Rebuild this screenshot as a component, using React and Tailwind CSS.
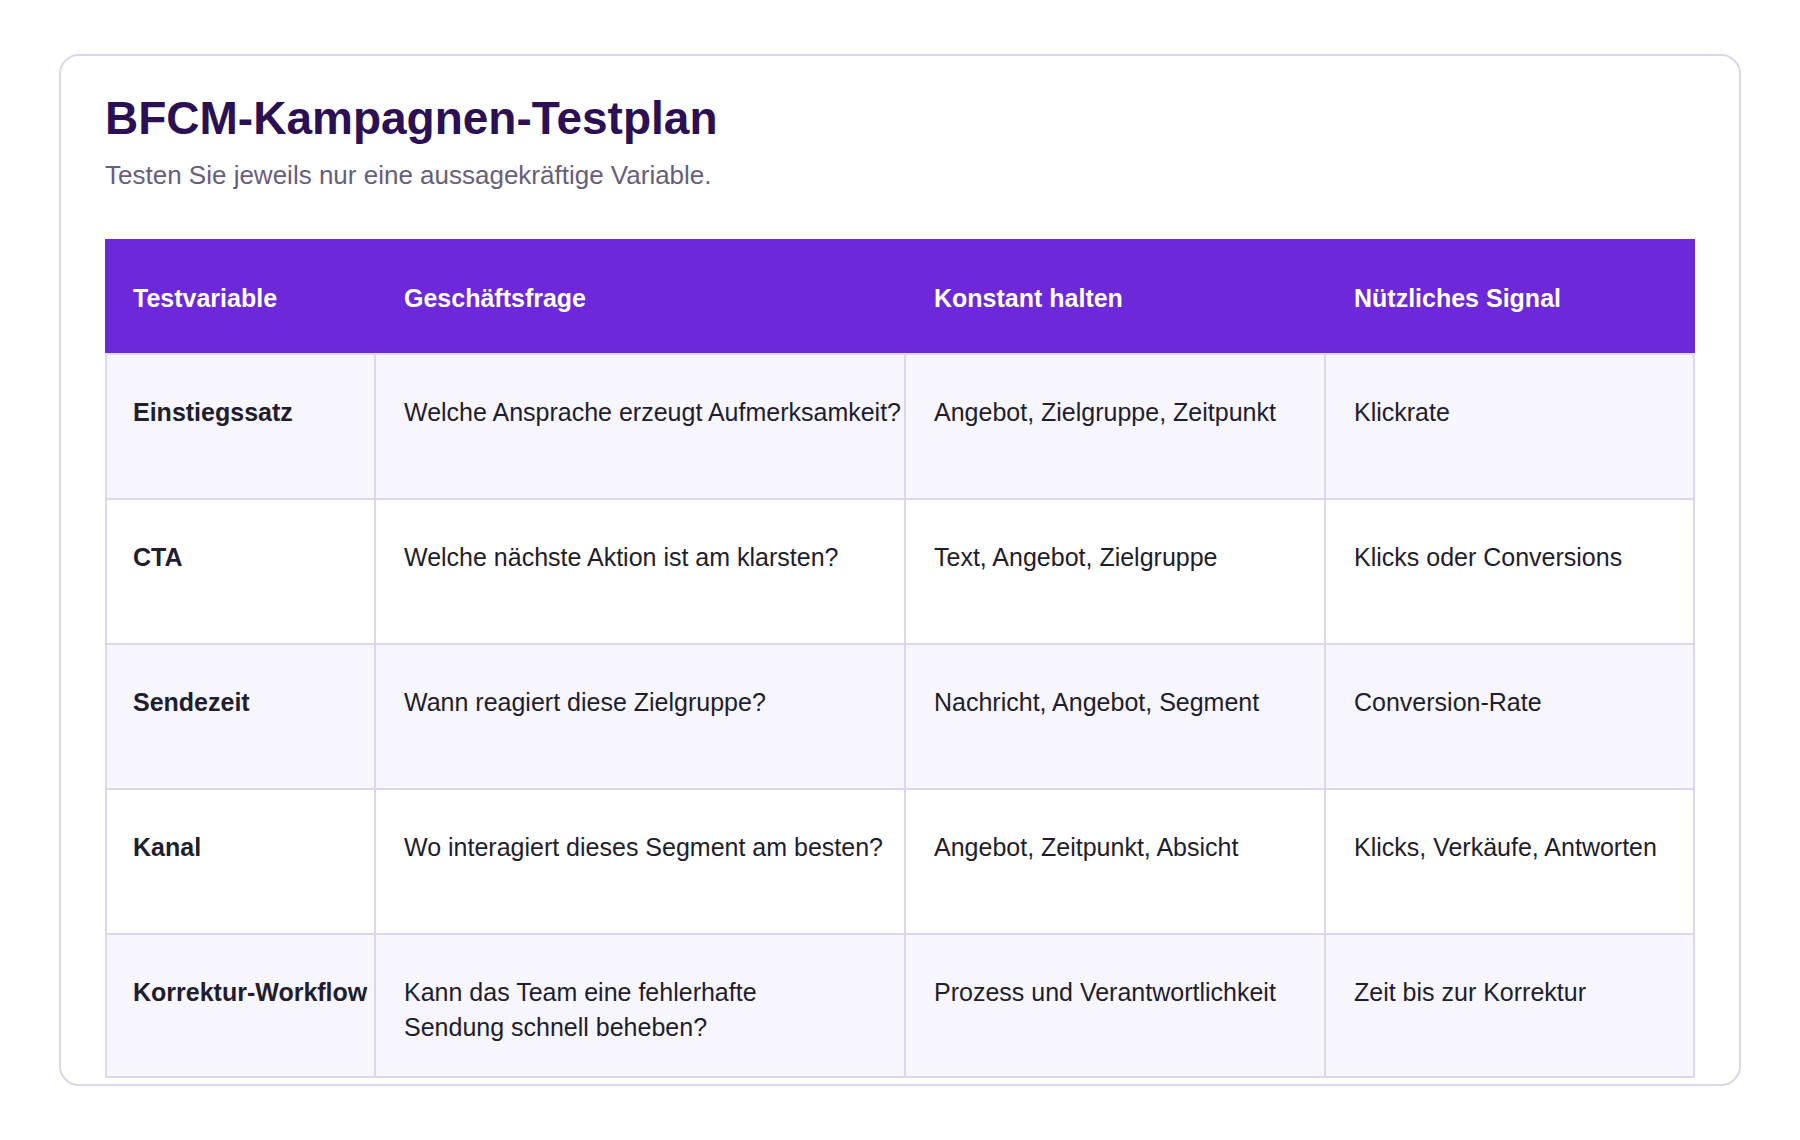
// App.jsx
const rows = [
  {
    variable: "Einstiegssatz",
    question: ["Welche Ansprache erzeugt Aufmerksamkeit?"],
    keep: "Angebot, Zielgruppe, Zeitpunkt",
    signal: "Klickrate",
  },
  {
    variable: "CTA",
    question: ["Welche nächste Aktion ist am klarsten?"],
    keep: "Text, Angebot, Zielgruppe",
    signal: "Klicks oder Conversions",
  },
  {
    variable: "Sendezeit",
    question: ["Wann reagiert diese Zielgruppe?"],
    keep: "Nachricht, Angebot, Segment",
    signal: "Conversion-Rate",
  },
  {
    variable: "Kanal",
    question: ["Wo interagiert dieses Segment am besten?"],
    keep: "Angebot, Zeitpunkt, Absicht",
    signal: "Klicks, Verkäufe, Antworten",
  },
  {
    variable: "Korrektur-Workflow",
    question: ["Kann das Team eine fehlerhafte", "Sendung schnell beheben?"],
    keep: "Prozess und Verantwortlichkeit",
    signal: "Zeit bis zur Korrektur",
  },
];

export default function App() {
  return (
    <div className="min-h-[1140px] bg-white px-[59px] pt-[54px] font-['Liberation_Sans',Arial,sans-serif]">
      {/* card */}
      <div className="h-[1032px] overflow-hidden rounded-[20px] border-2 border-[#dcd6ec] bg-white px-[44px] pt-[35px]">
        <h1 className="text-[46px] font-bold leading-[1.2] text-[#2b1153]">
          BFCM-Kampagnen-Testplan
        </h1>
        <p className="mt-[10px] text-[26px] leading-[1.5] text-[#675e7d]">
          Testen Sie jeweils nur eine aussagekräftige Variable.
        </p>

        {/* table */}
        <div className="mt-[44px] w-[1590px] text-[25px] leading-snug">
          <div className="grid h-[114px] grid-cols-[269px_530px_420px_371px] items-center bg-[#6d28d9] pt-[4px] font-bold text-white">
            <div className="pl-[28px]">Testvariable</div>
            <div className="pl-[30px]">Geschäftsfrage</div>
            <div className="pl-[30px]">Konstant halten</div>
            <div className="pl-[30px]">Nützliches Signal</div>
          </div>

          {rows.map((row, i) => (
            <div
              key={row.variable}
              className={
                "grid h-[145px] grid-cols-[269px_530px_420px_371px] border-t-2 border-[#ddd6ee] text-[#221d2d] " +
                (i % 2 === 0 ? "bg-[#f7f5fe]" : "bg-white") +
                (i === rows.length - 1 ? " border-b-2" : "")
              }
            >
              <div className="whitespace-nowrap border-l-2 border-[#ddd6ee] pl-[26px] pt-[40px] font-bold">
                {row.variable}
              </div>
              <div className="whitespace-nowrap border-l-2 border-[#ddd6ee] pl-[28px] pt-[40px]">
                {row.question.map((line) => (
                  <div key={line}>{line}</div>
                ))}
              </div>
              <div className="whitespace-nowrap border-l-2 border-[#ddd6ee] pl-[28px] pt-[40px]">
                {row.keep}
              </div>
              <div className="whitespace-nowrap border-x-2 border-[#ddd6ee] pl-[28px] pt-[40px]">
                {row.signal}
              </div>
            </div>
          ))}
        </div>
      </div>
    </div>
  );
}
